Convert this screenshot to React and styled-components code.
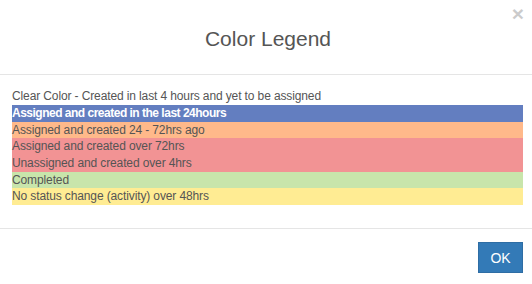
import React from "react";
import styled, { createGlobalStyle } from "styled-components";

const Global = createGlobalStyle`
  html, body { margin: 0; padding: 0; background: #fff; }
  body { font-family: "Liberation Sans", Arial, sans-serif; color: #555; }
`;

const Modal = styled.div`
  width: 532px;
  height: 284px;
  background: #fff;
  display: flex;
  flex-direction: column;
  position: relative;
`;

const Header = styled.div`
  height: 74px;
  border-bottom: 1px solid #e5e5e5;
  display: flex;
  align-items: center;
  justify-content: center;
  position: relative;
  box-sizing: content-box;
`;

const Title = styled.h4`
  margin: 0;
  font-size: 21px;
  font-weight: normal;
  color: #555;
  padding-left: 4px;
  padding-top: 4px;
`;

const Close = styled.button`
  position: absolute;
  top: 3px;
  right: 8px;
  border: 0;
  background: transparent;
  padding: 0;
  font-family: "Liberation Sans", Arial, sans-serif;
  font-size: 21px;
  font-weight: bold;
  color: #000;
  opacity: 0.2;
  line-height: 1;
  cursor: pointer;
`;

const Body = styled.div`
  height: 154px;
  padding: 13px 9px 0 12px;
  box-sizing: border-box;
  border-bottom: 1px solid #e5e5e5;
  font-size: 12px;
  letter-spacing: -0.12px;
`;

const Intro = styled.div`
  height: 17px;
  line-height: 17px;
  color: #555;
`;

const Row = styled.div`
  height: 16.67px;
  line-height: 16.67px;
  background: ${(p) => p.$bg};
  color: ${(p) => (p.$light ? "#fff" : "#555")};
  font-weight: ${(p) => (p.$light ? "bold" : "normal")};
  letter-spacing: ${(p) => (p.$light ? "-0.5px" : "-0.12px")};
  white-space: nowrap;
`;

const Footer = styled.div`
  flex: 1;
  display: flex;
  justify-content: flex-end;
  align-items: flex-start;
  padding: 13px 9px 0 0;
`;

const OkButton = styled.button`
  width: 45px;
  height: 31px;
  background: #337ab7;
  border: 1px solid #2e6da4;
  border-radius: 0;
  color: #fff;
  font-family: "Liberation Sans", Arial, sans-serif;
  font-size: 14px;
  padding: 0;
`;

const rows = [
  { text: "Assigned and created in the last 24hours", bg: "#637ec0", light: true },
  { text: "Assigned and created 24 - 72hrs ago", bg: "#ffb98a" },
  { text: "Assigned and created over 72hrs", bg: "#f29394" },
  { text: "Unassigned and created over 4hrs", bg: "#f29394" },
  { text: "Completed", bg: "#c8e5ab" },
  { text: "No status change (activity) over 48hrs", bg: "#ffec93" },
];

export default function App() {
  return (
    <>
      <Global />
      <Modal>
        <Header>
          <Title>Color Legend</Title>
          <Close aria-label="Close">×</Close>
        </Header>
        <Body>
          <Intro>Clear Color - Created in last 4 hours and yet to be assigned</Intro>
          {rows.map((r) => (
            <Row key={r.text} $bg={r.bg} $light={r.light}>
              {r.text}
            </Row>
          ))}
        </Body>
        <Footer>
          <OkButton>OK</OkButton>
        </Footer>
      </Modal>
    </>
  );
}
